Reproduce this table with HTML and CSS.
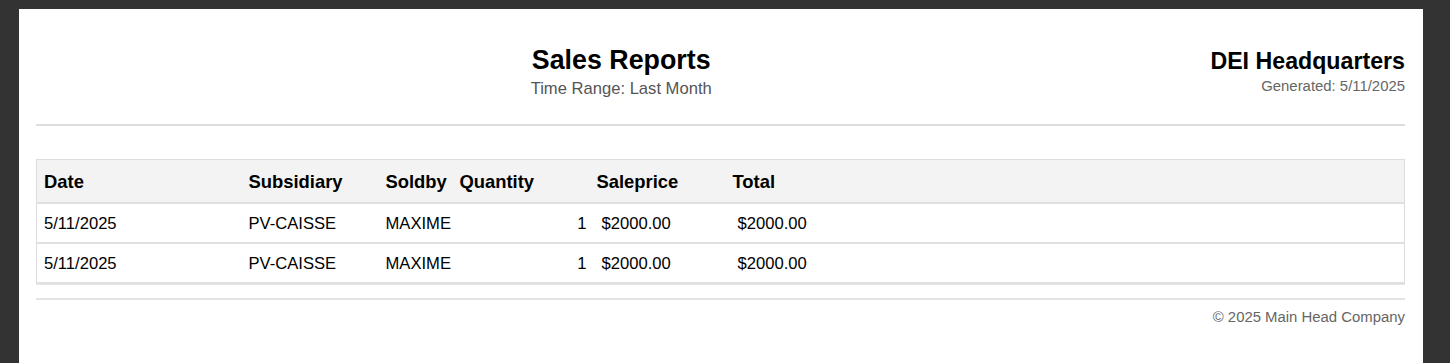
FILE: index.html
```html
<!DOCTYPE html>
<html lang="en">
<head>
<meta charset="utf-8">
<title>Sales Reports</title>
<link rel="stylesheet" href="styles.css">
</head>
<body>
<div class="sheet">
  <header class="report-header">
    <div class="spacer"></div>
    <div class="title-block">
      <h1 class="title">Sales Reports</h1>
      <div class="subtitle">Time Range: Last Month</div>
    </div>
    <div class="company-block">
      <div class="company">DEI Headquarters</div>
      <div class="generated">Generated: 5/11/2025</div>
    </div>
  </header>

  <table class="report-table">
    <colgroup>
      <col class="c-date">
      <col class="c-sub">
      <col class="c-sold">
      <col class="c-qty">
      <col class="c-price">
      <col class="c-total">
    </colgroup>
    <thead>
      <tr>
        <th>Date</th>
        <th>Subsidiary</th>
        <th>Soldby</th>
        <th>Quantity</th>
        <th>Saleprice</th>
        <th>Total</th>
      </tr>
    </thead>
    <tbody>
      <tr>
        <td>5/11/2025</td>
        <td>PV-CAISSE</td>
        <td>MAXIME</td>
        <td class="num">1</td>
        <td class="money">$2000.00</td>
        <td class="money">$2000.00</td>
      </tr>
      <tr>
        <td>5/11/2025</td>
        <td>PV-CAISSE</td>
        <td>MAXIME</td>
        <td class="num">1</td>
        <td class="money">$2000.00</td>
        <td class="money">$2000.00</td>
      </tr>
    </tbody>
  </table>

  <footer class="report-footer">© 2025 Main Head Company</footer>
</div>
</body>
</html>
```

FILE: styles.css
```css
html, body {
  margin: 0;
  height: 100%;
}
body {
  background: #333333;
  padding: 9px 27px 0 19px;
  box-sizing: border-box;
  font-family: "Liberation Sans", Arial, sans-serif;
  color: #000;
  overflow: hidden;
}
.sheet {
  background: #ffffff;
  padding: 0 18px 0 17px;
  min-height: 400px;
}
.report-header {
  display: flex;
  justify-content: space-between;
  align-items: flex-start;
  padding-top: 36px;
  padding-bottom: 25px;
  border-bottom: 2px solid #dddddd;
}
.spacer {
  width: 0;
}
.title-block {
  text-align: center;
  margin-right: 4px;
}
.title {
  margin: 0;
  font-size: 26.8px;
  line-height: 30px;
  font-weight: bold;
}
.subtitle {
  margin-top: 4px;
  font-size: 16.6px;
  line-height: 20px;
  color: #555555;
}
.company-block {
  text-align: right;
  padding-top: 3px;
}
.company {
  font-size: 23.2px;
  line-height: 26px;
  font-weight: bold;
}
.generated {
  margin-top: 4px;
  font-size: 14.9px;
  line-height: 16px;
  color: #666666;
}
.report-table {
  width: 100%;
  margin-top: 33px;
  border-collapse: collapse;
  border: 1px solid #dddddd;
  table-layout: fixed;
  box-shadow: 0 1px 0 #e6e6e6;
}
.c-date { width: 205px; }
.c-sub { width: 137px; }
.c-sold { width: 74px; }
.c-qty { width: 137px; }
.c-price { width: 136px; }
.report-table th {
  background: #f3f3f3;
  font-size: 18.4px;
  font-weight: bold;
  text-align: left;
  height: 43px;
  box-sizing: border-box;
  padding: 2px 7px 0;
  border-bottom: 2px solid #e0e0e0;
  white-space: nowrap;
}
.report-table td {
  font-size: 16.6px;
  height: 40px;
  box-sizing: border-box;
  padding: 2px 7px 0;
  border-bottom: 2px solid #e0e0e0;
  white-space: nowrap;
}
.report-table td.num {
  text-align: right;
  padding-right: 3px;
}
.report-table td.money {
  padding-left: 12px;
}
.report-footer {
  margin-top: 14px;
  border-top: 2px solid #e3e3e3;
  padding-top: 9px;
  text-align: right;
  font-size: 14.9px;
  color: #666666;
}
```
